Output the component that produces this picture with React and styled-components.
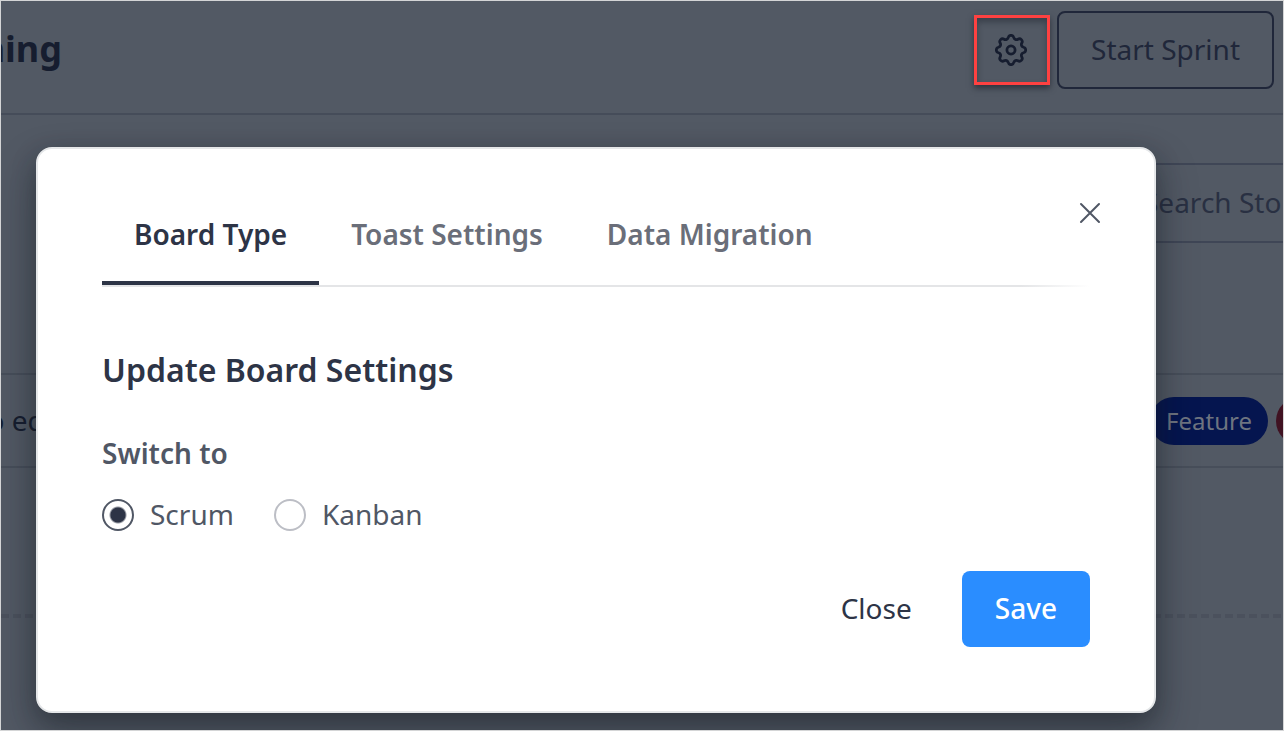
import React, { useState } from "react";
import styled, { createGlobalStyle } from "styled-components";

const Global = createGlobalStyle`
  *, *::before, *::after { box-sizing: border-box; }
  body { margin: 0; background: #525964; }
  body, button, input { font-family: "Noto Sans", sans-serif; }
  button { cursor: pointer; }
`;

const Page = styled.div`
  position: relative;
  min-height: 100vh;
  overflow: hidden;
  border: 1px solid #d4d5d6;
  background: #525964;
  color: #161d2f;
`;

const Header = styled.header`
  display: flex;
  align-items: center;
  justify-content: space-between;
  height: 114px;
  padding: 0 9px 14px 0;
  border-bottom: 2px solid #454c59;
`;

const Clip = styled.div`
  display: flex;
  justify-content: flex-end;
  overflow: hidden;
  white-space: nowrap;
  width: ${(p) => p.$width};
  padding-bottom: 2px;
`;

const PageTitle = styled.h1`
  margin: 0;
  font-size: 36px;
  line-height: 48px;
  font-weight: 700;
`;

const Actions = styled.div`
  display: flex;
  align-items: center;
  gap: 7px;
`;

const GearButton = styled.button`
  display: grid;
  place-items: center;
  width: 76px;
  height: 70px;
  padding: 0 2px 0 0;
  border: 3px solid #fe4141;
  background: transparent;
  color: #161d2f;
  box-shadow: 0 3px 6px rgba(20, 24, 34, 0.6), inset 0 4px 6px rgba(20, 24, 34, 0.4);
`;

const OutlineButton = styled.button`
  height: 78px;
  padding: 0 32px 2px;
  border: 2px solid #20273a;
  border-radius: 8px;
  background: transparent;
  color: #20273a;
  font-size: 28px;
`;

const SearchRow = styled.div`
  display: flex;
  justify-content: flex-end;
  padding: 48px 0 0;
`;

const Search = styled.input`
  width: 240px;
  height: 80px;
  padding: 0 0 2px 98px;
  border: 2px solid #3f4656;
  border-right: 0;
  background: transparent;
  color: #293042;
  font-size: 28px;
  outline: none;
  &::placeholder { color: #293042; opacity: 1; }
`;

const Story = styled.div`
  display: flex;
  align-items: center;
  justify-content: space-between;
  height: 95px;
  margin-top: 130px;
  border: 2px solid #474e5a;
  border-width: 2px 0;
  font-size: 28px;
`;

const Tags = styled.div`
  display: flex;
  gap: 8px;
`;

const Tag = styled.span`
  height: 48px;
  padding: 0 16px;
  border-radius: 24px;
  background: #05154f;
  color: #6e7480;
  font-size: 24px;
  line-height: 48px;
`;

const RedTag = styled(Tag)`
  width: 48px;
  margin-right: -41px;
  background: #401222;
`;

const DropLine = styled.div`
  height: 4px;
  margin-top: 146px;
  background: repeating-linear-gradient(90deg, #4b515d 0 8px, transparent 8px 12px);
`;

const Overlay = styled.div`
  position: absolute;
  inset: 0;
  padding: 146px 127px 0 35px;
  pointer-events: none;
`;

const Dialog = styled.section`
  pointer-events: auto;
  padding: 46px 64px 64px;
  border: 2px solid #e5e7e9;
  border-radius: 16px;
  background: #fff;
  box-shadow: 0 20px 40px rgba(20, 26, 34, 0.35), 0 8px 24px rgba(20, 26, 34, 0.3);
`;

const DialogTop = styled.div`
  position: relative;
`;

const TabList = styled.div`
  display: flex;
  height: 92px;
  background: linear-gradient(90deg, #e4e5e7 93%, #fff) left bottom / 100% 2px no-repeat;
`;

const Tab = styled.button`
  height: 90px;
  padding: 0 32px 8px;
  border: 0;
  border-bottom: 4px solid ${(p) => (p.$active ? "#2d3446" : "transparent")};
  background: none;
  color: ${(p) => (p.$active ? "#2d3446" : "#6a6e79")};
  font-size: 28px;
  font-weight: 600;
`;

const Dismiss = styled.button`
  position: absolute;
  top: 6px;
  right: -12px;
  display: grid;
  place-items: center;
  width: 24px;
  height: 24px;
  padding: 0;
  border: 0;
  background: none;
  color: #505765;
`;

const Heading = styled.h2`
  margin: 59px 0 0;
  color: #2d3446;
  font-size: 32px;
  line-height: 48px;
  font-weight: 600;
`;

const Choices = styled.fieldset`
  display: flex;
  gap: 40px;
  margin: 0;
  padding: 22px 0 0;
  border: 0;
`;

const Legend = styled.legend`
  padding: 39px 0 0;
  color: #505765;
  font-size: 28px;
  line-height: 40px;
  font-weight: 600;
`;

const Choice = styled.label`
  display: flex;
  align-items: center;
  gap: 16px;
  color: #505765;
  font-size: 28px;
  line-height: 40px;
`;

const ChoiceText = styled.span`
  padding-bottom: 2px;
  line-height: 38px;
`;

const Radio = styled.input`
  appearance: none;
  width: 32px;
  height: 32px;
  margin: 0;
  border: 2px solid #bcbec5;
  border-radius: 50%;
  background: #fff;
  &:checked {
    border-color: #505765;
    background: radial-gradient(circle, #2d3446 7px, #fff 9px);
  }
`;

const Footer = styled.footer`
  display: flex;
  justify-content: flex-end;
  gap: 16px;
  margin-top: 36px;
`;

const DialogButton = styled.button`
  height: 76px;
  padding: 0 ${(p) => (p.$primary ? "33px" : "34px")} 2px;
  border: 0;
  border-radius: 8px;
  background: ${(p) => (p.$primary ? "#2a8dff" : "transparent")};
  color: ${(p) => (p.$primary ? "#fff" : "#2d3446")};
  font-size: 28px;
  font-weight: ${(p) => (p.$primary ? 500 : 400)};
`;

function GearIcon() {
  return (
    <svg width="32" height="32" viewBox="2.2 2.2 19.6 19.6" fill="none" stroke="currentColor" strokeWidth="1.7" strokeLinejoin="round" aria-hidden="true">
      <path d="M10.325 4.317c.426-1.756 2.924-1.756 3.35 0a1.724 1.724 0 002.573 1.066c1.543-.94 3.31.826 2.37 2.37a1.724 1.724 0 001.065 2.572c1.756.426 1.756 2.924 0 3.35a1.724 1.724 0 00-1.066 2.573c.94 1.543-.826 3.31-2.37 2.37a1.724 1.724 0 00-2.572 1.065c-.426 1.756-2.924 1.756-3.35 0a1.724 1.724 0 00-2.573-1.066c-1.543.94-3.31-.826-2.37-2.37a1.724 1.724 0 00-1.065-2.572c-1.756-.426-1.756-2.924 0-3.35a1.724 1.724 0 001.066-2.573c-.94-1.543.826-3.31 2.37-2.37.996.608 2.296.07 2.572-1.065z" />
      <circle cx="12" cy="12" r="2.5" />
    </svg>
  );
}

function CloseIcon() {
  return (
    <svg width="24" height="24" viewBox="0 0 24 24" fill="none" stroke="currentColor" strokeWidth="2" strokeLinecap="round" aria-hidden="true">
      <path d="M3 3l18 18M21 3L3 21" />
    </svg>
  );
}

const TABS = ["Board Type", "Toast Settings", "Data Migration"];
const BOARDS = ["Scrum", "Kanban"];

export default function App() {
  const [tab, setTab] = useState(TABS[0]);
  const [board, setBoard] = useState(BOARDS[0]);
  return (
    <>
      <Global />
      <Page>
        <Header>
          <Clip $width="61px"><PageTitle>ning</PageTitle></Clip>
          <Actions>
            <GearButton type="button" aria-label="Board settings"><GearIcon /></GearButton>
            <OutlineButton type="button">Start Sprint</OutlineButton>
          </Actions>
        </Header>
        <SearchRow>
          <Search type="text" aria-label="Search" placeholder="Search Sto" />
        </SearchRow>
        <Story>
          <Clip $width="51px"><span>o edi</span></Clip>
          <Tags>
            <Tag>Feature</Tag>
            <RedTag />
          </Tags>
        </Story>
        <DropLine />
        <Overlay>
          <Dialog role="dialog" aria-labelledby="dialog-heading">
            <DialogTop>
              <TabList role="tablist">
                {TABS.map((name) => (
                  <Tab key={name} type="button" role="tab" aria-selected={tab === name} $active={tab === name} onClick={() => setTab(name)}>
                    {name}
                  </Tab>
                ))}
              </TabList>
              <Dismiss type="button" aria-label="Dismiss"><CloseIcon /></Dismiss>
            </DialogTop>
            <Heading id="dialog-heading">Update Board Settings</Heading>
            <Choices>
              <Legend>Switch to</Legend>
              {BOARDS.map((name) => (
                <Choice key={name}>
                  <Radio type="radio" name="board" checked={board === name} onChange={() => setBoard(name)} />
                  <ChoiceText>{name}</ChoiceText>
                </Choice>
              ))}
            </Choices>
            <Footer>
              <DialogButton type="button">Close</DialogButton>
              <DialogButton type="button" $primary>Save</DialogButton>
            </Footer>
          </Dialog>
        </Overlay>
      </Page>
    </>
  );
}
